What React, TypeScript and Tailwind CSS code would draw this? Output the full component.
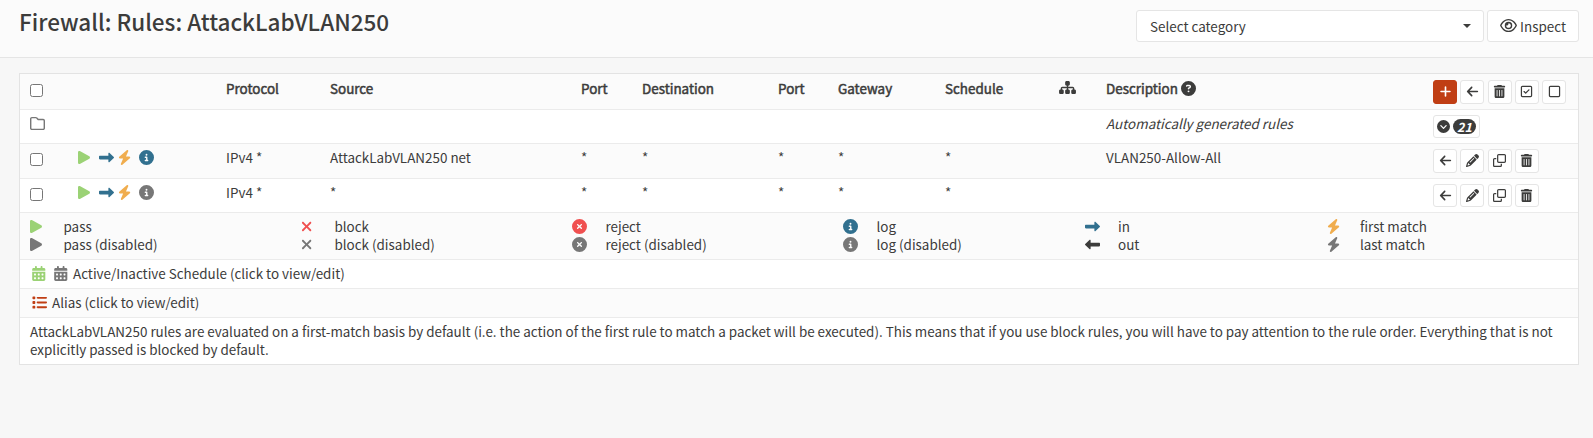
import type { ReactNode } from "react";
import {
  FaPlay, FaRightLong, FaLeftLong, FaBolt, FaCircleInfo, FaXmark, FaCircleXmark,
  FaRegFolder, FaSitemap, FaCircleQuestion, FaPlus, FaArrowLeft, FaTrashCan, FaPencil,
  FaRegClone, FaRegSquareCheck, FaRegSquare, FaCircleChevronDown, FaCalendarDays, FaList,
  FaRegEye,
} from "react-icons/fa6";

const COLS =
  "grid grid-cols-[48px_148px_104px_251px_61px_136px_60px_107px_113px_48px_327px_155px] border-b border-[#ebebeb] [&>*]:pl-[10px]";

function Checkbox() {
  return <input type="checkbox" className="block size-[13px] appearance-none rounded-[2.5px] border border-[#767676] bg-white" />;
}

function Btn({ children, primary = false, short = false }: { children: ReactNode; primary?: boolean; short?: boolean }) {
  return (
    <button
      className={`flex w-6 items-center justify-center rounded-[3px] border pb-px text-[13px] ${short ? "h-[23px]" : "h-6"} ${
        primary ? "border-[#c03e14] bg-[#c03e14] text-white" : "border-[#e5e5e5] bg-white text-[#3c3c3b]"
      }`}
    >
      {children}
    </button>
  );
}

function RuleRow({ source, description, logged }: { source: string; description: string; logged: boolean }) {
  return (
    <div className={`${COLS} ${logged ? "h-[35px] bg-[#fbfbfb]" : "h-[34px] bg-white"}`}>
      <div className="pt-[9px]"><Checkbox /></div>
      <div className="flex items-start pt-[6px] text-[15px]">
        <FaPlay className="h-[15px] w-[12px] text-[#9bd275]" preserveAspectRatio="none" />
        <FaRightLong className="ml-[8.5px] text-[#31708f]" />
        <FaBolt className="ml-[4.5px] w-[13.125px] text-[#f0ad4e]" />
        <FaCircleInfo className={`ml-[8px] ${logged ? "text-[#31708f]" : "text-[#777]"}`} />
      </div>
      <div className="pt-[4px]">IPv4 *</div>
      <div className="pt-[4px]">{source}</div>
      <div className="pt-[4px]">*</div>
      <div className="pt-[4px]">*</div>
      <div className="pt-[4px]">*</div>
      <div className="pt-[4px]">*</div>
      <div className="pt-[4px]">*</div>
      <div />
      <div className="pt-[4px]">{description}</div>
      <div className="flex gap-[3.3px] pt-[5px]">
        <Btn short={!logged}><FaArrowLeft /></Btn>
        <Btn short={!logged}><FaPencil /></Btn>
        <Btn short={!logged}><FaRegClone /></Btn>
        <Btn short={!logged}><FaTrashCan /></Btn>
      </div>
    </div>
  );
}

function Legend({ icon, off, label, offLabel }: { icon: ReactNode; off: ReactNode; label: string; offLabel: string }) {
  return (
    <div className="grid auto-rows-[18px] grid-cols-[33.5px_1fr]">
      <div className="flex items-center text-[15px]">{icon}</div>
      <div>{label}</div>
      <div className="flex items-center text-[15px]">{off}</div>
      <div>{offLabel}</div>
    </div>
  );
}

export default function App() {
  return (
    <div className="min-h-[438px] bg-[#f7f7f7] font-['Noto_Sans_CJK_SC',sans-serif] text-[13.43px] leading-[18px] text-[#3c3c3b]">
      <header className="flex h-[58px] justify-between border-b border-[#e5e5e5] bg-[#fbfbfb] pr-[14px] pl-[19px]">
        <h1 className="pt-[8px] text-[22.5px] leading-[26px] font-medium">Firewall: Rules: AttackLabVLAN250</h1>
        <div className="flex gap-[3px] pt-[10px]">
          <div className="flex h-8 w-[348px] items-center justify-between rounded-[3px] border border-[#e5e5e5] bg-white pr-[12px] pb-px pl-[13px]">
            <span>Select category</span>
            <svg viewBox="0 0 8 4" className="h-1 w-2" fill="currentColor"><path d="M0 0h8L4 4z" /></svg>
          </div>
          <button className="flex h-8 w-[92px] items-center justify-center gap-[3px] rounded-[3px] border border-[#e5e5e5] bg-white pb-px">
            <FaRegEye className="-mt-px h-[15px] w-[17px]" />
            <span>Inspect</span>
          </button>
        </div>
      </header>
      <main className="pt-[15px] pr-[14px] pl-[19px]">
        <div className="border border-[#e3e3e3] bg-white">
          <div className={`${COLS} h-[36px] bg-[#fbfbfb] [-webkit-text-stroke:0.5px_#3c3c3b]`}>
            <div className="pt-[10px]"><Checkbox /></div>
            <div />
            <div className="pt-[5px]">Protocol</div>
            <div className="pt-[5px]">Source</div>
            <div className="pt-[5px]">Port</div>
            <div className="pt-[5px]">Destination</div>
            <div className="pt-[5px]">Port</div>
            <div className="pt-[5px]">Gateway</div>
            <div className="pt-[5px]">Schedule</div>
            <div className="pt-[6px]"><FaSitemap className="ml-[0.5px] h-[15px] w-[17px]" /></div>
            <div className="flex gap-[3px] pt-[5px]">Description <FaCircleQuestion className="mt-[2px] text-[15px]" /></div>
            <div className="flex gap-[3.3px] pt-[6px]">
              <Btn primary><FaPlus /></Btn>
              <Btn><FaArrowLeft /></Btn>
              <Btn><FaTrashCan /></Btn>
              <Btn><FaRegSquareCheck /></Btn>
              <Btn><FaRegSquare /></Btn>
            </div>
          </div>
          <div className={`${COLS} h-[34px] bg-white`}>
            <div className="pt-[6px]"><FaRegFolder className="text-[15px] text-[#777]" /></div>
            <div /><div /><div /><div /><div /><div /><div /><div /><div />
            <div className="pt-[4px] italic">Automatically generated rules</div>
            <div className="pt-[5px]">
              <button className="flex h-[23px] w-[47px] items-center gap-[3px] rounded-[3px] border border-[#e5e5e5] bg-white pl-[3px]">
                <FaCircleChevronDown className="text-[13px]" />
                <span className="flex h-[15px] w-[23px] items-center justify-center rounded-full bg-[#3c3c3b] text-[12.5px] font-bold text-white italic">21</span>
              </button>
            </div>
          </div>
          <RuleRow source="AttackLabVLAN250 net" description="VLAN250-Allow-All" logged />
          <RuleRow source="*" description="" logged={false} />
          <div className="grid h-[47px] grid-cols-[271px_271px_271px_241.5px_242px_1fr] border-b border-[#ebebeb] bg-[#fbfbfb] pt-[4px] pl-[10px]">
            <Legend label="pass" offLabel="pass (disabled)"
              icon={<FaPlay className="h-[15px] w-[12px] text-[#9bd275]" preserveAspectRatio="none" />}
              off={<FaPlay className="h-[15px] w-[12px] text-[#777]" preserveAspectRatio="none" />} />
            <Legend label="block" offLabel="block (disabled)"
              icon={<FaXmark className="w-[11.25px] text-[#f05050]" />} off={<FaXmark className="w-[11.25px] text-[#777]" />} />
            <Legend label="reject" offLabel="reject (disabled)"
              icon={<FaCircleXmark className="text-[#f05050]" />} off={<FaCircleXmark className="text-[#777]" />} />
            <Legend label="log" offLabel="log (disabled)"
              icon={<FaCircleInfo className="text-[#31708f]" />} off={<FaCircleInfo className="text-[#777]" />} />
            <Legend label="in" offLabel="out"
              icon={<FaRightLong className="text-[#31708f]" />} off={<FaLeftLong />} />
            <Legend label="first match" offLabel="last match"
              icon={<FaBolt className="w-[13.125px] text-[#f0ad4e]" />} off={<FaBolt className="w-[13.125px] text-[#777]" />} />
          </div>
          <div className="flex h-[29px] border-b border-[#ebebeb] bg-white pt-[4px] pl-[12px]">
            <FaCalendarDays className="mt-[2px] h-[15px] w-[13.5px] text-[#9bd275]" />
            <FaCalendarDays className="mt-[2px] mr-[5.5px] ml-[8.5px] h-[15px] w-[13.5px] text-[#777]" />
            <span>Active/Inactive Schedule (click to view/edit)</span>
          </div>
          <div className="flex h-[29px] border-b border-[#ebebeb] bg-[#fbfbfb] pt-[4px] pl-[12px]">
            <FaList className="mt-[2px] mr-[5px] text-[15px] text-[#c03e14]" />
            <span>Alias (click to view/edit)</span>
          </div>
          <div className="h-[46px] bg-white px-[10px] pt-[4px]">
            AttackLabVLAN250 rules are evaluated on a first-match basis by default (i.e. the action of the first rule to match a packet will be executed). This means that if you use block rules, you will have to pay attention to the rule order. Everything that is not explicitly passed is blocked by default.
          </div>
        </div>
      </main>
    </div>
  );
}
